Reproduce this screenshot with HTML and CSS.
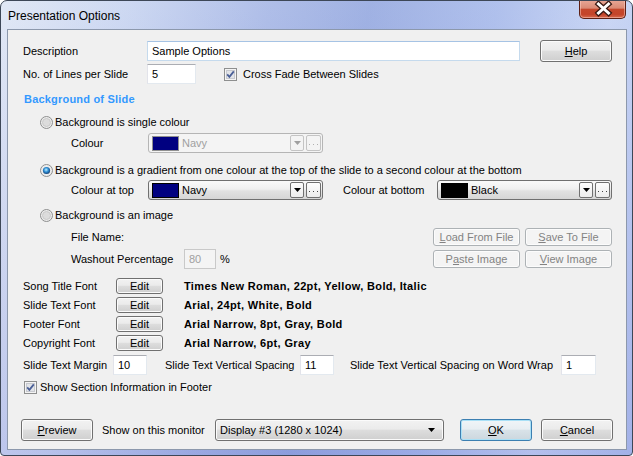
FILE: index.html
```html
<!DOCTYPE html>
<html lang="en">
<head>
    <meta charset="UTF-8">
    <title>Presentation Options</title>
    <link rel="stylesheet" href="styles.css">
</head>
<body>
<div class="window">
    <div class="titlebar">
        <span class="title">Presentation Options</span>
        <div class="close">
            <svg width="47" height="19" viewBox="0 0 47 19">
                <path d="M18.5 5 L28.5 14 M28.5 5 L18.5 14" stroke="#3b1a14" stroke-width="5.5" stroke-linecap="square"/>
                <path d="M18.5 5 L28.5 14 M28.5 5 L18.5 14" stroke="#ffffff" stroke-width="3" stroke-linecap="square"/>
            </svg>
        </div>
    </div>
    <div class="client">
        <div class="row r-desc">
            <span class="lbl" style="width:124px">Description</span>
            <div class="field desc">Sample Options</div>
            <div class="btn help"><span><u>H</u>elp</span></div>
        </div>
        <div class="row r-lines">
            <span class="lbl" style="width:124px">No. of Lines per Slide</span>
            <div class="field lines">5</div>
            <span class="check cross"><svg width="13" height="13" viewBox="0 0 13 13"><rect x="0.5" y="0.5" width="12" height="12" fill="#f4f4f4" stroke="#8e8f8f"/><rect x="2.5" y="2.5" width="8" height="8" fill="#e2e4e8" stroke="#c7c9cf"/><path d="M3.2 6.4 L5.4 8.8 L9.8 3.4" fill="none" stroke="#4a5f97" stroke-width="1.8"/></svg></span>
            <span>Cross Fade Between Slides</span>
        </div>

        <div class="heading">Background of Slide</div>

        <div class="row opt first">
            <span class="radio"><svg width="13" height="13" viewBox="0 0 13 13"><circle cx="6.5" cy="6.5" r="6" fill="#ececec" stroke="#8e8f8f"/><circle cx="6.5" cy="6.5" r="4" fill="#dcdcdc" stroke="#c9c9c9"/></svg></span>
            <span>Background is single colour</span>
        </div>
        <div class="row sub r-colour">
            <span class="lbl" style="width:77px">Colour</span>
            <div class="cpick dis">
                <span class="swatch navy"></span>
                <span class="cname">Navy</span>
                <span class="arrow"><svg width="7" height="4" viewBox="0 0 7 4"><path d="M0 0 H7 L3.5 4 Z" fill="#a0a0a0"/></svg></span>
                <span class="more"><svg width="9" height="3" viewBox="0 0 9 3"><rect x="0" y="1" width="1" height="1" fill="#b0b0b0"/><rect x="4" y="1" width="1" height="1" fill="#b0b0b0"/><rect x="8" y="1" width="1" height="1" fill="#b0b0b0"/></svg></span>
            </div>
        </div>

        <div class="row opt second">
            <span class="radio"><svg width="13" height="13" viewBox="0 0 13 13"><defs><radialGradient id="dot" cx="0.45" cy="0.4" r="0.6"><stop offset="0" stop-color="#bff0ff"/><stop offset="0.5" stop-color="#2f8fd6"/><stop offset="1" stop-color="#123f73"/></radialGradient></defs><circle cx="6.5" cy="6.5" r="6" fill="#ececec" stroke="#8e8f8f"/><circle cx="6.5" cy="6.5" r="3.6" fill="url(#dot)"/></svg></span>
            <span>Background is a gradient from one colour at the top of the slide to a second colour at the bottom</span>
        </div>
        <div class="row sub r-top">
            <span class="lbl" style="width:77px">Colour at top</span>
            <div class="cpick">
                <span class="swatch navy"></span>
                <span class="cname">Navy</span>
                <span class="arrow"><svg width="7" height="4" viewBox="0 0 7 4"><path d="M0 0 H7 L3.5 4 Z" fill="#000"/></svg></span>
                <span class="more"><svg width="9" height="3" viewBox="0 0 9 3"><rect x="0" y="1" width="1" height="1" fill="#444"/><rect x="4" y="1" width="1" height="1" fill="#444"/><rect x="8" y="1" width="1" height="1" fill="#444"/></svg></span>
            </div>
            <span class="lbl bottom-lbl" style="width:94px">Colour at bottom</span>
            <div class="cpick">
                <span class="swatch black"></span>
                <span class="cname">Black</span>
                <span class="arrow"><svg width="7" height="4" viewBox="0 0 7 4"><path d="M0 0 H7 L3.5 4 Z" fill="#000"/></svg></span>
                <span class="more"><svg width="9" height="3" viewBox="0 0 9 3"><rect x="0" y="1" width="1" height="1" fill="#444"/><rect x="4" y="1" width="1" height="1" fill="#444"/><rect x="8" y="1" width="1" height="1" fill="#444"/></svg></span>
            </div>
        </div>

        <div class="row opt third">
            <span class="radio"><svg width="13" height="13" viewBox="0 0 13 13"><circle cx="6.5" cy="6.5" r="6" fill="#ececec" stroke="#8e8f8f"/><circle cx="6.5" cy="6.5" r="4" fill="#dcdcdc" stroke="#c9c9c9"/></svg></span>
            <span>Background is an image</span>
        </div>
        <div class="row sub r-file">
            <span class="lbl">File Name:</span>
            <div class="btn-pair">
                <div class="btn dis small"><span><u>L</u>oad From File</span></div>
                <div class="btn dis small"><span><u>S</u>ave To File</span></div>
            </div>
        </div>
        <div class="row sub r-wash">
            <span class="lbl" style="width:113px">Washout Percentage</span>
            <div class="field dis wash">80</div>
            <span class="pct">%</span>
            <div class="btn-pair">
                <div class="btn dis small"><span>P<u>a</u>ste Image</span></div>
                <div class="btn dis small"><span><u>V</u>iew Image</span></div>
            </div>
        </div>

        <div class="fonts">
            <div class="row r-font">
                <span class="lbl" style="width:93px">Song Title Font</span>
                <div class="btn edit"><span>Edit</span></div>
                <span class="fdesc">Times New Roman, 22pt, Yellow, Bold, Italic</span>
            </div>
            <div class="row r-font">
                <span class="lbl" style="width:93px">Slide Text Font</span>
                <div class="btn edit"><span>Edit</span></div>
                <span class="fdesc">Arial, 24pt, White, Bold</span>
            </div>
            <div class="row r-font">
                <span class="lbl" style="width:93px">Footer Font</span>
                <div class="btn edit"><span>Edit</span></div>
                <span class="fdesc">Arial Narrow, 8pt, Gray, Bold</span>
            </div>
            <div class="row r-font">
                <span class="lbl" style="width:93px">Copyright Font</span>
                <div class="btn edit"><span>Edit</span></div>
                <span class="fdesc">Arial Narrow, 6pt, Gray</span>
            </div>
        </div>

        <div class="row r-margin">
            <span class="lbl" style="width:90px">Slide Text Margin</span>
            <div class="field num">10</div>
            <span class="lbl gap18" style="width:135px">Slide Text Vertical Spacing</span>
            <div class="field num">11</div>
            <span class="lbl gap16" style="width:211px">Slide Text Vertical Spacing on Word Wrap</span>
            <div class="field num wide">1</div>
        </div>
        <div class="row r-show">
            <span class="check"><svg width="13" height="13" viewBox="0 0 13 13"><rect x="0.5" y="0.5" width="12" height="12" fill="#f4f4f4" stroke="#8e8f8f"/><rect x="2.5" y="2.5" width="8" height="8" fill="#e2e4e8" stroke="#c7c9cf"/><path d="M3.2 6.4 L5.4 8.8 L9.8 3.4" fill="none" stroke="#4a5f97" stroke-width="1.8"/></svg></span>
            <span>Show Section Information in Footer</span>
        </div>

        <div class="row r-bottom">
            <div class="btn preview"><span><u>P</u>review</span></div>
            <span class="lbl monitor-lbl">Show on this monitor</span>
            <div class="combo">
                <span>Display #3 (1280 x 1024)</span>
                <svg width="7" height="4" viewBox="0 0 7 4"><path d="M0 0 H7 L3.5 4 Z" fill="#000"/></svg>
            </div>
            <div class="btn def ok"><span><u>O</u>K</span></div>
            <div class="btn cancel"><span><u>C</u>ancel</span></div>
        </div>
    </div>
</div>
</body>
</html>
```

FILE: styles.css
```css
* {
    box-sizing: border-box;
}
body {
    margin: 0;
    font-family: "Liberation Sans", Arial, sans-serif;
    font-size: 11px;
    color: #000;
    background: #fff;
}
.window {
    width: 633px;
    height: 456px;
    border: 1px solid #3d4757;
    border-radius: 7px 7px 4px 4px;
    background:
        linear-gradient(to bottom, rgba(255, 255, 255, 0.12), rgba(110, 110, 210, 0.18)),
        linear-gradient(100deg, #dde5f4 0%, #c6d3f0 18%, #a4b5e5 38%, #93a7df 52%, #a5b8ea 70%, #c3d1f3 86%, #aec0ed 100%);
    padding: 0 5px 5px 6px;
    display: flex;
    flex-direction: column;
    overflow: hidden;
}
.titlebar {
    height: 28px;
    display: flex;
    align-items: flex-start;
}
.title {
    margin: 8px 0 0 1px;
    font-size: 12px;
    color: #000;
}
.close {
    margin-left: auto;
    width: 47px;
    height: 19px;
    margin-top: -1px;
    margin-right: 1px;
    border: 1px solid #5e2015;
    border-top: none;
    border-radius: 0 0 5px 5px;
    background: linear-gradient(#e9a897 0%, #da8a75 45%, #c5472c 52%, #c4442a 80%, #d66a4e 100%);
    box-shadow: inset 0 0 0 1px rgba(255, 210, 200, 0.5);
    overflow: hidden;
}
.close svg {
    display: block;
    margin-top: -1px;
}
.client {
    flex: 1;
    background: #f0f0f0;
    border: 1px solid #8c98ac;
    padding: 11px 14px 8px 15px;
    display: flex;
    flex-direction: column;
}
.row {
    display: flex;
    align-items: center;
    white-space: nowrap;
}
.lbl {
    flex: none;
    white-space: nowrap;
}

/* text fields */
.field {
    height: 20px;
    background: #fff;
    border: 1px solid #abadb3;
    border-color: #abadb3 #e3e9ef #e3e9ef #e2e3ea;
    padding-left: 4px;
    display: flex;
    align-items: center;
    flex: none;
}
.field.desc {
    width: 373px;
    border-color: #a6c3e4 #c5daed #c5daed #c5daed;
}
.field.lines {
    width: 49px;
}
.field.dis {
    background: #f4f4f4;
    border-color: #c9c9c9;
    color: #a0a0a0;
}
.field.wash {
    width: 32px;
}
.field.num {
    width: 34px;
}
.field.num.wide {
    width: 35px;
}

/* buttons */
.btn {
    height: 22px;
    border: 1px solid #707070;
    border-radius: 3px;
    background: linear-gradient(#f2f2f2 0%, #ebebeb 45%, #dddddd 52%, #cfcfcf 100%);
    box-shadow: inset 0 0 0 1px #fbfbfb;
    display: flex;
    align-items: center;
    justify-content: center;
    flex: none;
}
.btn.dis {
    border-color: #adb2b5;
    background: #f4f4f4;
    box-shadow: inset 0 0 0 1px #fcfcfc;
    color: #838383;
}
.btn.def {
    border-color: #3c7fb1;
    box-shadow: inset 0 0 0 1px #a9e0f6;
    background: linear-gradient(#f0f5f8 0%, #e8eef2 45%, #d8e2e8 52%, #ccd7de 100%);
}
.btn.small {
    width: 87px;
    height: 18px;
}
.btn-pair {
    margin-left: auto;
    display: flex;
    gap: 5px;
}
.help {
    width: 72px;
    margin-left: auto;
}
.edit {
    width: 47px;
    height: 16px;
}
.preview, .ok, .cancel {
    width: 72px;
}
.preview {
    margin-left: -2px;
}
.ok {
    margin-left: 16px;
}
.cancel {
    margin-left: 9px;
}

/* check boxes and radios */
.check, .radio {
    width: 13px;
    height: 13px;
    flex: none;
}
.check svg, .radio svg {
    display: block;
}
.r-desc {
    height: 20px;
}
.r-lines {
    height: 20px;
    margin-top: 3px;
}
.check.cross {
    margin: 0 6px 0 28px;
}
.heading {
    margin-top: 8px;
    line-height: 14px;
    padding-left: 1px;
    font-weight: bold;
    letter-spacing: 0.2px;
    color: #3399ff;
}
.opt {
    height: 14px;
    padding-left: 17px;
}
.opt .radio {
    margin-right: 2px;
}
.opt.first {
    margin-top: 9px;
}
.opt.second {
    margin-top: 10px;
}
.opt.third {
    margin-top: 8px;
}
.sub {
    padding-left: 48px;
}

/* colour pickers */
.r-colour {
    height: 20px;
    margin-top: 4px;
}
.r-top {
    height: 20px;
    margin-top: 3px;
}
.bottom-lbl {
    margin-left: 20px;
}
.cpick {
    width: 175px;
    height: 20px;
    flex: none;
    border: 1px solid #707070;
    border-radius: 3px;
    background: linear-gradient(#fafafa 0%, #f0f0f0 45%, #e2e2e2 55%, #d6d6d6 100%);
    display: flex;
    align-items: center;
    padding: 0 1px 0 3px;
}
.cpick.dis {
    border-color: #b5b5b5;
    background: #f4f4f4;
    color: #a0a0a0;
}
.swatch {
    width: 27px;
    height: 15px;
    border: 1px solid #000;
    margin-right: 3px;
    flex: none;
}
.cpick.dis .swatch {
    border-color: #909090;
}
.swatch.navy {
    background: #000080;
}
.swatch.black {
    background: #000;
}
.cname {
    flex: 1;
}
.arrow, .more {
    height: 16px;
    border: 1px solid #707070;
    border-radius: 2px;
    background: linear-gradient(#fdfdfd, #ececec);
    display: flex;
    align-items: center;
    justify-content: center;
    flex: none;
}
.arrow {
    width: 14px;
    margin-right: 2px;
}
.more {
    width: 15px;
}
.more svg {
    display: block;
    margin-top: 3px;
}
.cpick.dis .arrow, .cpick.dis .more {
    border-color: #c4c4c4;
    background: #f4f4f4;
}

/* image options */
.r-file {
    height: 18px;
    margin-top: 6px;
}
.r-wash {
    height: 20px;
    margin-top: 3px;
}
.pct {
    margin-left: 4px;
}

/* fonts */
.fonts {
    margin-top: 7px;
}
.r-font {
    height: 19px;
}
.fdesc {
    margin-left: 21px;
    font-weight: bold;
    letter-spacing: 0.35px;
}

.r-margin {
    height: 20px;
    margin-top: 3px;
}
.gap18 {
    margin-left: 18px;
}
.gap16 {
    margin-left: 16px;
}
.r-show {
    height: 14px;
    margin-top: 5px;
    padding-left: 1px;
}
.r-show .check {
    margin-right: 3px;
}

/* bottom bar */
.r-bottom {
    margin-top: auto;
    height: 22px;
}
.monitor-lbl {
    width: 113px;
    margin-left: 9px;
}
.combo {
    width: 229px;
    height: 22px;
    flex: none;
    border: 1px solid #707070;
    border-radius: 3px;
    background: linear-gradient(#f2f2f2 0%, #ebebeb 45%, #dddddd 52%, #cfcfcf 100%);
    box-shadow: inset 0 0 0 1px #fbfbfb;
    display: flex;
    align-items: center;
    justify-content: space-between;
    padding: 0 8px 0 4px;
}
```
